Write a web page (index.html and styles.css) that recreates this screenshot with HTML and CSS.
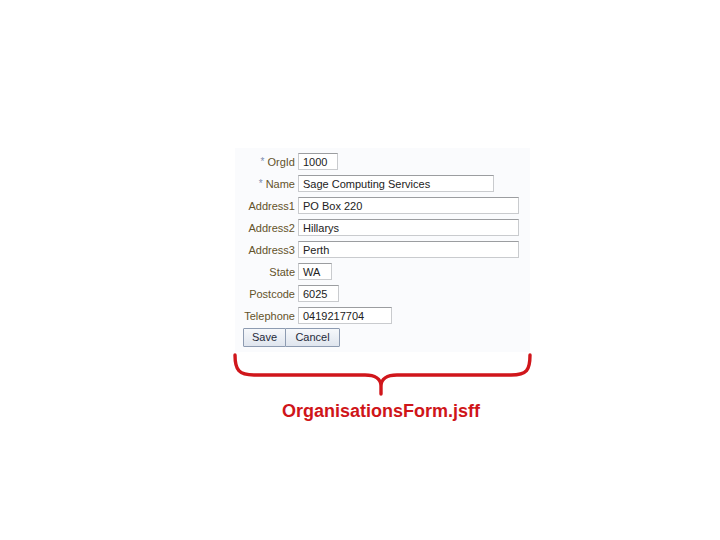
FILE: index.html
```html
<!DOCTYPE html>
<html>
<head>
<meta charset="utf-8">
<link rel="stylesheet" href="styles.css">
</head>
<body>
<div class="page">
  <div class="panel">
    <div class="form">
      <label class="lbl"><span class="req">*</span> OrgId</label>
      <div class="field w-org">1000</div>
      <label class="lbl"><span class="req">*</span> Name</label>
      <div class="field w-name">Sage Computing Services</div>
      <label class="lbl">Address1</label>
      <div class="field w-addr">PO Box 220</div>
      <label class="lbl">Address2</label>
      <div class="field w-addr">Hillarys</div>
      <label class="lbl">Address3</label>
      <div class="field w-addr">Perth</div>
      <label class="lbl">State</label>
      <div class="field w-state">WA</div>
      <label class="lbl">Postcode</label>
      <div class="field w-post">6025</div>
      <label class="lbl">Telephone</label>
      <div class="field w-tel">0419217704</div>
      <div class="buttons">
        <button class="btn btn-save">Save</button><button class="btn btn-cancel">Cancel</button>
      </div>
    </div>
  </div>
  <svg class="brace" width="305" height="45" viewBox="0 0 305 45">
    <path d="M5,3 C5,18 9,23 24,23 L135,23 C145,23 151,27 151,34 L151,42 M151,34 C151,27 157,23 167,23 L281,23 C297,23 300,18 300,3" fill="none" stroke="#d0161b" stroke-width="3.4" stroke-linecap="round" stroke-linejoin="round"/>
  </svg>
  <div class="caption">OrganisationsForm.jsff</div>
</div>
</body>
</html>
```
FILE: styles.css
```css
html, body {
  margin: 0;
  padding: 0;
  background: #ffffff;
}
.page {
  padding-top: 148px;
  padding-left: 230px;
  width: 305px;
}
.panel {
  margin-left: 5px;
  width: 295px;
  height: 204px;
  background: #fafbfd;
  box-sizing: border-box;
  padding: 5px 0 0 8px;
}
.form {
  display: grid;
  grid-template-columns: 52px auto;
  column-gap: 3px;
  row-gap: 5px;
  align-items: center;
  font-family: "Liberation Sans", Arial, sans-serif;
  font-size: 11px;
}
.lbl {
  text-align: right;
  color: #64532a;
  white-space: nowrap;
  line-height: 17px;
  padding-top: 1px;
  height: 17px;
  box-sizing: border-box;
}
.req {
  color: #7d8db0;
  font-size: 10px;
  position: relative;
  top: -1px;
}
.field {
  height: 17px;
  box-sizing: border-box;
  border: 1px solid #c9cbce;
  border-top-color: #9b9da0;
  background: #ffffff;
  color: #222222;
  padding-left: 4px;
  padding-top: 1px;
  line-height: 15px;
  white-space: nowrap;
}
.w-org { width: 40px; }
.w-name { width: 196px; }
.w-addr { width: 221px; }
.w-state { width: 34px; }
.w-post { width: 41px; }
.w-tel { width: 94px; }
.buttons {
  grid-column: 1 / span 2;
  display: flex;
  margin-top: -1px;
}
.btn {
  font-family: "Liberation Sans", Arial, sans-serif;
  font-size: 11px;
  color: #1f2a3a;
  height: 19px;
  padding: 0;
  border: 1px solid #8d9bb1;
  border-radius: 1px;
  background: linear-gradient(#f6f8fb, #dfe5ee);
  line-height: 17px;
}
.btn-save { width: 43px; }
.btn-cancel { width: 55px; margin-left: -1px; }
.brace {
  display: block;
  margin-top: 0;
}
.caption {
  margin-top: 4px;
  width: 302px;
  text-align: center;
  font-family: "Liberation Sans", Arial, sans-serif;
  font-weight: bold;
  font-size: 18px;
  line-height: 20px;
  color: #cf1519;
}
```
